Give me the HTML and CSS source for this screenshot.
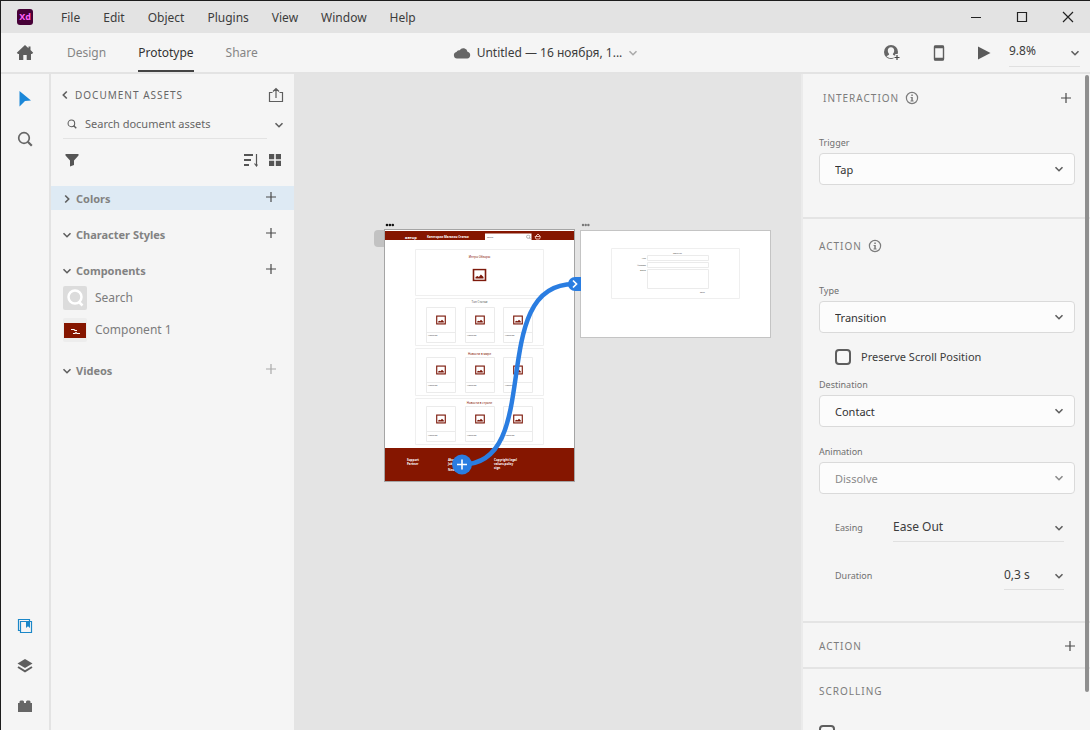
FILE: index.html
```html
<!DOCTYPE html>
<html lang="en">
<head>
<meta charset="utf-8">
<title>Untitled — Adobe XD</title>
<link rel="stylesheet" href="styles.css">
</head>
<body>
<svg class="defs" aria-hidden="true">
  <symbol id="down" viewBox="0 0 10 10"><path d="M1.5 3.2 5 6.7 8.5 3.2" fill="none" stroke="currentColor" stroke-width="1.6"/></symbol>
  <symbol id="right" viewBox="0 0 10 10"><path d="M3.2 1.5 6.7 5 3.2 8.5" fill="none" stroke="currentColor" stroke-width="1.6"/></symbol>
  <symbol id="plus" viewBox="0 0 12 12"><path d="M6 1v10M1 6h10" fill="none" stroke="currentColor" stroke-width="1.2"/></symbol>
  <symbol id="info" viewBox="0 0 14 14"><circle cx="7" cy="7" r="5.6" fill="none" stroke="currentColor" stroke-width="1.2"/><path d="M6.3 3.6h1.5v1.4H6.3zM5.6 6h2.2v3.4h.8v1H5.5v-1h.8V7h-.7z" fill="currentColor"/></symbol>
  <symbol id="lens" viewBox="0 0 16 16"><circle cx="7" cy="7" r="5.3" fill="none" stroke="currentColor" stroke-width="1.7"/><path d="m10.8 10.8 4 4" stroke="currentColor" stroke-width="2.2"/></symbol>
  <symbol id="picture" viewBox="0 0 14 13"><rect x="1" y="1" width="12" height="11" fill="#fff" stroke="#7d1a0c" stroke-width="1.6"/><path d="M3 10V8.6l2-1.2 1.4 1L8.4 6 11 8.6V10z" fill="#7d1a0c"/></symbol>
  <symbol id="card" viewBox="0 0 30 36"><path d="M.5.5h29v35H.5zM.5 25.500h29" fill="none" stroke="#ebebeb"/><use href="#picture" x="10" y="8" width="10" height="10"/></symbol>
</svg>
<div class="app">
  <header class="titlebar">
    <svg class="logo" viewBox="0 0 16 16" role="img" aria-label="Xd"><rect width="16" height="16" rx="3" fill="#470137"/><text x="8" y="11" class="logo-text">Xd</text></svg>
    <nav class="menu">
      <button>File</button><button>Edit</button><button>Object</button><button>Plugins</button><button>View</button><button>Window</button><button>Help</button>
    </nav>
    <div class="window-controls">
      <button aria-label="Minimize"><svg width="12" height="12"><path d="M1 6.500h10" stroke="#222"/></svg></button>
      <button aria-label="Maximize"><svg width="12" height="12"><path d="M1.500 1.500h9v9h-9z" fill="none" stroke="#222" stroke-width="1.2"/></svg></button>
      <button aria-label="Close"><svg width="12" height="12"><path d="m1 1 10 10M11 1 1 11" stroke="#222" stroke-width="1.200"/></svg></button>
    </div>
  </header>

  <div class="toolbar">
    <div class="toolbar-left">
      <button class="home" aria-label="Home"><svg width="18" height="16" viewBox="0 0 18 16"><path d="M9 0 0.800 7.800 2 9h1v6h4.300v-5h3.400v5H15V9h1l1.200-1.200L14.500 5V1.500h-2v1.800z" fill="#5e5e5e"/></svg></button>
      <nav class="tabs">
        <button>Design</button><button class="active">Prototype</button><button>Share</button>
      </nav>
    </div>
    <button class="doc-name">
      <svg width="18" height="12" viewBox="0 0 18 12"><path d="M4 11.500a3.300 3.300 0 0 1-.6-6.500 3 3 0 0 1 3.300-1.700 4.200 4.200 0 0 1 7.800 1.500 3.400 3.400 0 0 1-.3 6.700z" fill="#666"/></svg>
      <span>Untitled — 16 ноября, 1...</span>
      <svg class="i10 faint"><use href="#down"/></svg>
    </button>
    <div class="toolbar-right">
      <button aria-label="Invite"><svg width="18" height="18" viewBox="0 0 18 18"><circle cx="8" cy="8" r="7" fill="#666"/><path d="M8 3.200c-2 0-3.200 1.300-3.200 3.300 0 1.500.5 2.600 1.400 3.500 0 1.200-1.700 1.400-2.700 2.200C4.600 13.400 6.200 14 8 14s3.400-.6 4.500-1.800c-1-.8-2.700-1-2.700-2.200.9-.9 1.400-2 1.400-3.500 0-2-1.200-3.300-3.200-3.300z" fill="#f5f5f5"/><path d="M14 10v7M10.500 13.500h7" stroke="#f5f5f5" stroke-width="3.500"/><path d="M14 11v5M11.500 13.500h5" stroke="#444" stroke-width="1.200"/></svg></button>
      <button aria-label="Device preview"><svg width="12" height="18" viewBox="0 0 12 18"><rect x="1.500" y="2" width="9" height="14" rx="1" fill="none" stroke="#5e5e5e" stroke-width="1.400"/><path d="M1 3h10M1 15h10" stroke="#5e5e5e" stroke-width="2.500"/></svg></button>
      <button aria-label="Play"><svg width="14" height="14"><path d="M1 .5 13.500 7 1 13.500z" fill="#5a5a5a"/></svg></button>
      <label class="pick underline zoom"><select aria-label="Zoom"><option>9.8%</option></select><svg class="i10"><use href="#down"/></svg></label>
    </div>
  </div>

  <main class="workspace">
    <aside class="rail">
      <button aria-label="Select"><svg width="12" height="18"><path d="M.5 1 12 10.500 6 11 .5 16.500z" fill="#1b87d8"/></svg></button>
      <button aria-label="Zoom tool"><svg class="i16"><use href="#lens"/></svg></button>
      <span class="spacer"></span>
      <button aria-label="Assets"><svg width="16" height="16"><path d="M12.500 3.500v-2h-11v11h2M3.500 3.500h11v11h-11z" fill="none" stroke="#1b87c8" stroke-width="1.200"/><path d="M9 4h4v6L11 8.200 9 10z" fill="#1b87c8"/></svg></button>
      <button aria-label="Layers"><svg width="16" height="16"><path d="m8 1 7.500 4.500L8 10 .5 5.500z" fill="#5e5e5e"/><path d="m1 9 7 4.300L15 9" fill="none" stroke="#5e5e5e" stroke-width="2"/></svg></button>
      <button aria-label="Plugins"><svg width="16" height="16"><path d="M1 5h1.500V3.500l1-1h2.500l1 1V5h2V3.500l1-1h2.500l1 1V5H15v9H1z" fill="#666"/></svg></button>
    </aside>

    <section class="assets">
      <div class="assets-head">
        <button class="back"><svg class="i10 flip"><use href="#right"/></svg><span>DOCUMENT ASSETS</span></button>
        <button aria-label="Publish"><svg width="16" height="16"><path d="M4.500 5.500h-3v9h13v-9h-3M8 11V2M5 4.500 8 1.500l3 3" fill="none" stroke="#5e5e5e" stroke-width="1.200"/></svg></button>
      </div>
      <div class="search">
        <label class="search-box"><svg class="i10"><use href="#lens"/></svg><input type="text" placeholder="Search document assets" aria-label="Search document assets"></label>
        <button aria-label="Search options"><svg class="i10"><use href="#down"/></svg></button>
      </div>
      <div class="filters">
        <button aria-label="Filter"><svg width="14" height="14"><path d="M.5 1h13v1.500L9 7.500V12l-4 1.500v-6L.5 2.500z" fill="#555"/></svg></button>
        <span class="spacer"></span>
        <button aria-label="Sort"><svg width="16" height="14"><path d="M1 2h9M1 7h7M1 12h5" stroke="#555" stroke-width="1.800"/><path d="M13.500 1v12M11.500 10.500l2 2.500 1-1.500" fill="none" stroke="#555" stroke-width="1.200"/></svg></button>
        <button aria-label="Grid view"><svg width="12" height="12"><path d="M0 0h5.200v5.200H0zM6.800 0H12v5.200H6.800zM0 6.800h5.200V12H0zM6.800 6.800H12V12H6.800z" fill="#555"/></svg></button>
      </div>
      <div class="groups">
        <div class="group selected"><button class="group-name"><svg class="i10"><use href="#right"/></svg>Colors</button><button class="add" aria-label="Add color"><svg class="i12"><use href="#plus"/></svg></button></div>
        <div class="group"><button class="group-name"><svg class="i10"><use href="#down"/></svg>Character Styles</button><button class="add" aria-label="Add character style"><svg class="i12"><use href="#plus"/></svg></button></div>
        <div>
          <div class="group"><button class="group-name"><svg class="i10"><use href="#down"/></svg>Components</button><button class="add" aria-label="Add component"><svg class="i12"><use href="#plus"/></svg></button></div>
          <ul class="components">
            <li><svg width="24" height="24"><rect width="24" height="24" rx="2" fill="#dcdcdc"/><circle cx="12" cy="11" r="6.500" fill="none" stroke="#fff" stroke-width="2.500"/><path d="m16 16 3.500 3.500" stroke="#fff" stroke-width="2.500"/></svg><span>Search</span></li>
            <li><svg width="24" height="24"><rect width="24" height="24" rx="2" fill="#ededed"/><path d="M1 5h22v15H1z" fill="#851600"/><path d="M8 11.500h3l1 1h2M10 15.500h2l1-1 1 1h3" fill="none" stroke="#fff" stroke-width="1.100"/></svg><span>Component 1</span></li>
          </ul>
        </div>
        <div class="group"><button class="group-name"><svg class="i10"><use href="#down"/></svg>Videos</button><button class="add faint" aria-label="Add video"><svg class="i12"><use href="#plus"/></svg></button></div>
      </div>
    </section>

    <section class="canvas" aria-label="Canvas">
      <svg class="boards" width="400" height="270" viewBox="374 220 400 270">
        <rect x="374" y="230" width="20" height="17" rx="4" fill="#c2c2c2"/>
        <g fill="#111"><circle cx="387" cy="225" r="1.300"/><circle cx="389.900" cy="225" r="1.300"/><circle cx="392.800" cy="225" r="1.300"/></g>
        <g fill="#777"><circle cx="583" cy="225" r="1.200"/><circle cx="585.700" cy="225" r="1.200"/><circle cx="588.400" cy="225" r="1.200"/></g>
        <rect x="384.500" y="229.500" width="190" height="252" fill="#fff" stroke="#a5a5a5"/>
        <path d="M385 231h189v9H385zM385 448h189v33H385z" fill="#851600"/>
        <text x="405" y="238.500" class="micro micro-logo">автор</text>
        <text x="427" y="238" class="micro micro-nav">Категории  Магазин  Статьи</text>
        <rect x="485" y="233.500" width="46.500" height="6.500" fill="#fff"/>
        <text x="487" y="238" class="micro micro-card">Search</text>
        <use href="#lens" x="526" y="234.500" width="5" height="5" color="#777"/>
        <path d="M535 236.500h5.500l-1 2.500h-3.500zM536 236l2-2 2 2" fill="none" stroke="#e9b9ae" stroke-width="1"/>
        <path d="M415.500 249.500h128v46h-128zM415.500 298.500h128v47h-128zM415.500 348.500h128v47h-128zM415.500 398.500h128v46h-128z" fill="none" stroke="#efefef"/>
        <text x="479.500" y="258" class="micro micro-head">Интро Обзоры</text>
        <use href="#picture" x="472" y="268.500" width="15" height="13"/>
        <text x="479.500" y="303" class="micro micro-head gray">Топ Статьи</text>
        <use href="#card" x="426" y="307" width="30" height="36"/><use href="#card" x="465" y="307" width="30" height="36"/><use href="#card" x="503" y="307" width="30" height="36"/>
        <text x="479.500" y="355" class="micro micro-head">Новости в мире</text>
        <use href="#card" x="426" y="357" width="30" height="36"/><use href="#card" x="465" y="357" width="30" height="36"/><use href="#card" x="503" y="357" width="30" height="36"/>
        <text x="479.500" y="404" class="micro micro-head">Новости в стране</text>
        <use href="#card" x="426" y="406" width="30" height="36"/><use href="#card" x="465" y="406" width="30" height="36"/><use href="#card" x="503" y="406" width="30" height="36"/>
        <g class="micro micro-card">
          <text x="428" y="336">Название</text><text x="467" y="336">Название</text><text x="505" y="336">Название</text>
          <text x="428" y="386">Название</text><text x="467" y="386">Название</text><text x="505" y="386">Название</text>
          <text x="428" y="436">Название</text><text x="467" y="436">Название</text><text x="505" y="436">Название</text>
        </g>
        <g class="micro micro-foot">
          <text x="407" y="461">Support</text><text x="407" y="465">Partner</text>
          <text x="448" y="461">About</text><text x="448" y="465">Jobs</text><text x="448" y="471">News</text>
          <text x="494" y="461">Copyright legal</text><text x="494" y="465">values.policy</text><text x="494" y="469">sign</text>
        </g>
        <rect x="580.500" y="230.500" width="190" height="107" fill="#fff" stroke="#c4c4c4"/>
        <path d="M611.500 248.500h128v50h-128z" fill="none" stroke="#efefef"/>
        <path d="M647.500 255.500h61v5h-61zM647.500 262.500h61v5h-61zM647.500 269.500h61v19h-61z" fill="none" stroke="#ebebeb"/>
        <text x="677.500" y="254" class="micro micro-form center">CONTACT</text>
        <g class="micro micro-form end"><text x="646" y="259">Имя</text><text x="646" y="266">Фамилия</text><text x="646" y="271">Отзыв</text></g>
        <text x="700" y="293" class="micro micro-form">Send</text>
        <path d="M462 464.500C546 464.500 485 284 574 284" fill="none" stroke="#2a7de1" stroke-width="4.500"/>
        <path d="M575 277h6v14h-6a7 7 0 0 1 0-14z" fill="#2a7de1"/>
        <path d="m573 280.500 3.500 3.500-3.500 3.500" fill="none" stroke="#fff" stroke-width="1.700"/>
        <circle cx="462" cy="464.500" r="10" fill="#2a7de1"/>
        <path d="M457 464.500h10M462 459.500v10" stroke="#fff" stroke-width="1.600"/>
      </svg>
    </section>

    <aside class="inspector">
      <section class="block interaction">
        <div class="block-head inset"><h2>INTERACTION</h2><svg class="i14"><use href="#info"/></svg><span class="spacer"></span><button aria-label="Add interaction"><svg class="i12"><use href="#plus"/></svg></button></div>
        <label class="field" for="trigger">Trigger</label>
        <div class="pick box"><select id="trigger"><option>Tap</option></select><svg class="i10"><use href="#down"/></svg></div>
      </section>
      <section class="block action">
        <div class="block-head"><h2>ACTION</h2><svg class="i14"><use href="#info"/></svg></div>
        <label class="field" for="type">Type</label>
        <div class="pick box"><select id="type"><option>Transition</option></select><svg class="i10"><use href="#down"/></svg></div>
        <label class="check"><input type="checkbox">Preserve Scroll Position</label>
        <label class="field" for="destination">Destination</label>
        <div class="pick box"><select id="destination"><option>Contact</option></select><svg class="i10"><use href="#down"/></svg></div>
        <label class="field spaced" for="animation">Animation</label>
        <div class="pick box muted"><select id="animation"><option>Dissolve</option></select><svg class="i10"><use href="#down"/></svg></div>
        <div class="line"><label for="easing">Easing</label><div class="pick underline wide"><select id="easing"><option>Ease Out</option></select><svg class="i10"><use href="#down"/></svg></div></div>
        <div class="line"><label for="duration">Duration</label><div class="pick underline short"><select id="duration"><option>0,3 s</option></select><svg class="i10"><use href="#down"/></svg></div></div>
      </section>
      <section class="block second-action"><div class="block-head"><h2>ACTION</h2><span class="spacer"></span><button aria-label="Add action"><svg class="i12"><use href="#plus"/></svg></button></div></section>
      <section class="block scrolling"><div class="block-head"><h2>SCROLLING</h2></div><input type="checkbox" aria-label="Fix position when scrolling"></section>
      <span class="scrollbar"></span>
    </aside>
  </main>
</div>
</body>
</html>
```
FILE: styles.css
```css
* { box-sizing: border-box; }
body {
  margin: 0;
  background: #f5f5f5;
  color: #3c3c3c;
  font: 12px/16px "Noto Sans", "Open Sans", sans-serif;
}
button, select, input { font: inherit; color: inherit; margin: 0; }
button { display: flex; align-items: center; border: 0; padding: 0; background: none; }
svg { display: block; flex: none; }
h2 { margin: 0; font-size: 10px; font-weight: 400; letter-spacing: 1px; color: #7c7c7c; }
ul { list-style: none; margin: 0; padding: 0; }
.defs { position: absolute; width: 0; height: 0; }
.i10 { width: 10px; height: 10px; color: #5e5e5e; }
.i12 { width: 12px; height: 12px; color: #4a4a4a; }
.i14 { width: 14px; height: 14px; color: #7c7c7c; }
.i16 { width: 16px; height: 16px; color: #666; }
.flip { transform: scaleX(-1); }
.spacer { flex: 1; }
.faint, .faint svg { color: #aaa; }

.app {
  display: flex;
  flex-direction: column;
  height: 100vh;
  border-top: 1px solid #1c1c1c;
  border-left: 1px solid #1c1c1c;
}

.titlebar { display: flex; align-items: center; height: 32px; padding: 0 16px; background: #e3e3e3; }
.logo { width: 16px; height: 16px; }
.logo-text { font-size: 9px; font-weight: 700; fill: #ff61f6; text-anchor: middle; }
.menu { display: flex; gap: 23px; margin-left: 28px; padding-top: 1px; flex: 1; }
.window-controls { display: flex; gap: 34px; }

.toolbar {
  display: grid;
  grid-template-columns: 1fr auto 1fr;
  height: 41px;
  border-bottom: 2px solid #e3e3e3;
  background: #f5f5f5;
}
.toolbar-left, .toolbar-right { display: flex; align-items: center; }
.home { padding-left: 15px; }
.tabs { display: flex; align-self: stretch; gap: 32px; margin-left: 33px; color: #858585; }
.tabs button { border-bottom: 2px solid transparent; padding-top: 2px; }
.tabs .active { color: #333; border-color: #444; }
.doc-name { gap: 6px; }
.toolbar-right { justify-content: flex-end; gap: 32px; padding-right: 10px; }
.zoom { width: 71px; margin-left: -14px; }

.workspace { display: flex; flex: 1; min-height: 0; }
.rail { display: flex; flex-direction: column; width: 50px; padding: 5px 0 4px; border-right: 2px solid #e3e3e3; }
.rail button { justify-content: center; height: 40px; }

.assets { width: 243px; }
.assets-head { display: flex; align-items: center; justify-content: space-between; height: 36px; padding: 6px 10px 0 9px; }
.back { gap: 5px; font-size: 10px; letter-spacing: 1px; color: #666; }
.search { display: flex; height: 29px; padding: 0 10px 0 12px; gap: 7px; }
.search-box { display: flex; flex: 1; align-items: center; gap: 8px; padding-left: 4px; border-bottom: 1px solid #e3e3e3; }
.search-box input { width: 100%; min-width: 0; padding: 0; border: 0; background: none; outline: 0; font-size: 11px; }
.search-box input::placeholder { color: #666; opacity: 1; }
.filters { display: flex; align-items: center; gap: 10px; height: 41px; padding: 0 13px 0 14px; }
.groups { display: flex; flex-direction: column; gap: 12px; padding-top: 6px; }
.group { display: flex; align-items: center; justify-content: space-between; height: 24px; padding: 0 17px 0 11px; }
.selected { background: #deeaf4; }
.group-name { gap: 4px; padding-top: 2px; font-size: 11px; font-weight: 700; color: #828282; }
.add { padding-bottom: 3px; }
.components li { display: flex; align-items: center; gap: 8px; height: 32px; padding-left: 12px; color: #7c7c7c; }

.canvas { flex: 1; min-width: 0; overflow: hidden; background: #e4e4e4; padding: 146px 0 0 80px; }
.micro { font-size: 3px; fill: #444; }
.micro-card { font-size: 2px; }
.micro-logo { font-size: 4px; font-weight: 700; fill: #fff; }
.micro-nav { font-weight: 700; fill: #fff; }
.micro-head { fill: #851600; text-anchor: middle; }
.micro-head.gray { fill: #555; }
.micro-foot { fill: #fff; font-weight: 700; }
.micro-form { font-size: 2px; }
.center { text-anchor: middle; }
.end { text-anchor: end; }

.inspector { position: relative; width: 289px; overflow: hidden; background: #f5f5f5; border-left: 2px solid #ebebeb; }
.scrollbar { position: absolute; top: 1px; right: 1px; width: 4px; height: 94%; border-radius: 2px; background: #8f8f8f; }
.block { padding: 0 15px 0 16px; border-bottom: 2px solid #e4e4e4; }
.interaction { padding-top: 12px; padding-bottom: 32px; }
.action { padding-top: 15px; padding-bottom: 31px; }
.second-action { padding: 11px 14px 9px 16px; }
.scrolling { padding-top: 10px; border: 0; }
.block-head { display: flex; align-items: center; gap: 6px; height: 24px; }
.inset { padding: 0 3px 0 4px; }
.field { display: block; padding: 25px 0 2px; font-size: 9px; color: #707070; }
.check, .box select { font-size: 11px; }

.pick { display: grid; align-items: center; }
.pick select { grid-area: 1 / 1; width: 100%; appearance: none; border: 0; padding: 0; background: none; outline: 0; }
.pick svg { grid-area: 1 / 1; justify-self: end; pointer-events: none; }
.box select { height: 32px; padding: 2px 15px 0; border: 1px solid #dadada; border-radius: 4px; background: #fcfcfc; color: #333; }
.box svg { margin-right: 11px; }
.box.muted select { color: #8a8a8a; }
.muted svg { color: #8a8a8a; }
.underline select { height: 28px; padding-bottom: 2px; border-bottom: 1px solid #e0e0e0; }
.check { display: flex; align-items: center; gap: 10px; height: 16px; margin: 16px 0 0 16px; }
input[type="checkbox"] { appearance: none; width: 16px; height: 16px; border: 2px solid #5e5e5e; border-radius: 4px; background: #f8f8f8; }
.action .check + .field { padding-top: 12px; }
.action .spaced { padding-top: 17px; }
.line { display: flex; align-items: center; justify-content: space-between; height: 28px; margin-top: 20px; padding: 0 11px 0 16px; }
.line label { font-size: 9px; color: #707070; }
.wide { width: 171px; }
.short { width: 60px; }
.scrolling input { display: block; margin-top: 22px; }
```
